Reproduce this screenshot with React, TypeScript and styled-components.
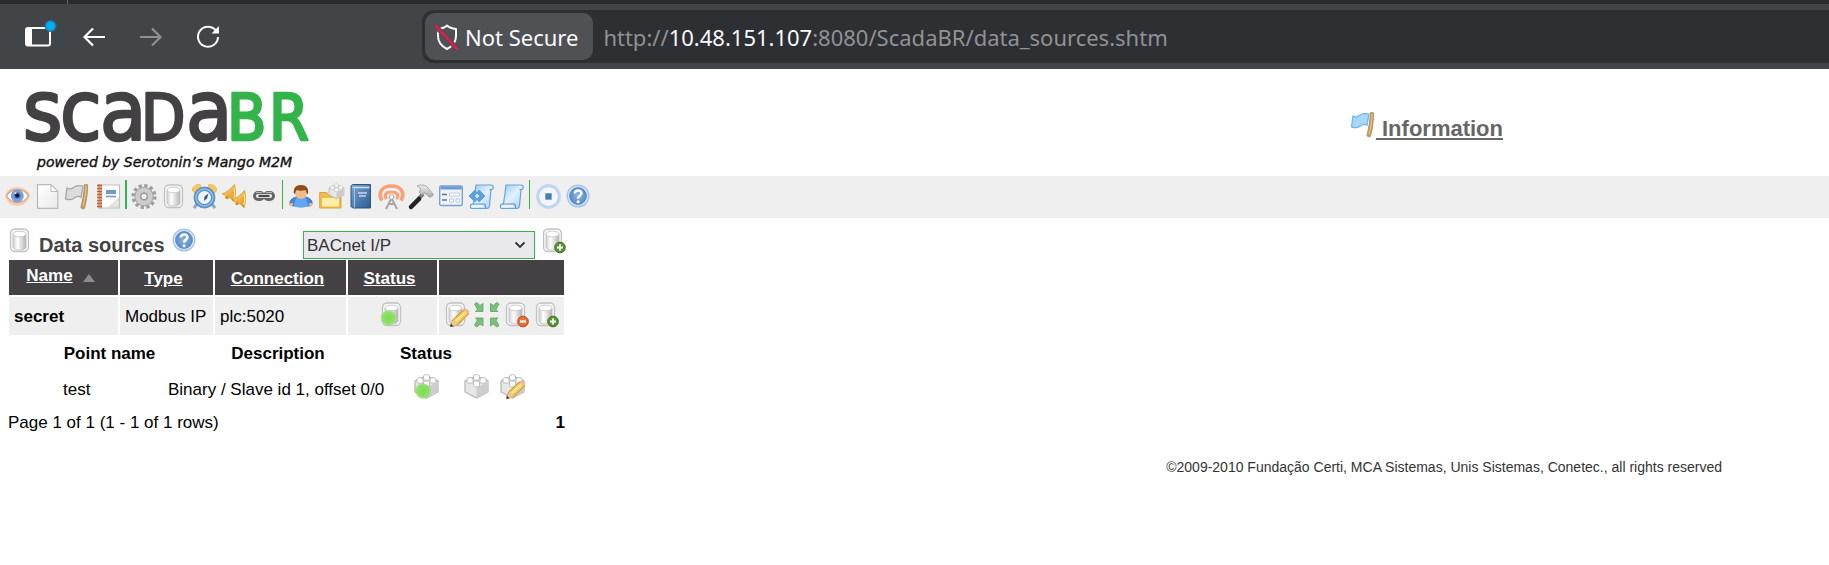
import React from "react";
import styled, { createGlobalStyle } from "styled-components";

const GlobalStyle = createGlobalStyle`
  * {
    box-sizing: border-box;
  }

  body {
    margin: 0;
    background: #ffffff;
    color: #000000;
    font-family: "Liberation Sans", Arial, sans-serif;
    font-size: 17px;
    line-height: 20px;
  }
`;

const Gradients: React.FC = () => (
  <HiddenSvg aria-hidden="true">
    <defs>
      <linearGradient id="metal" x1="0" x2="1">
        <stop offset="0" stopColor="#cfcfcf" />
        <stop offset="0.35" stopColor="#ffffff" />
        <stop offset="1" stopColor="#b4b4b4" />
      </linearGradient>
      <linearGradient id="silver" x1="0" y1="0" x2="0" y2="1">
        <stop offset="0" stopColor="#f0f0f0" />
        <stop offset="1" stopColor="#a9a9a9" />
      </linearGradient>
      <linearGradient id="paper" x1="0" y1="0" x2="1" y2="1">
        <stop offset="0" stopColor="#ffffff" />
        <stop offset="1" stopColor="#e9e9e9" />
      </linearGradient>
      <linearGradient id="sky" x1="0" y1="0" x2="1" y2="1">
        <stop offset="0" stopColor="#8fc4f5" />
        <stop offset="0.5" stopColor="#e2f1ff" />
        <stop offset="1" stopColor="#a5cdf2" />
      </linearGradient>
      <linearGradient id="gold" x1="0" y1="0" x2="1" y2="1">
        <stop offset="0" stopColor="#f6cf72" />
        <stop offset="0.5" stopColor="#f3b94a" />
        <stop offset="1" stopColor="#d8901f" />
      </linearGradient>
      <linearGradient id="navy" x1="0" y1="0" x2="1" y2="1">
        <stop offset="0" stopColor="#7ba6d2" />
        <stop offset="1" stopColor="#2c5b91" />
      </linearGradient>
      <radialGradient id="blue">
        <stop offset="0" stopColor="#8bb4e2" />
        <stop offset="1" stopColor="#5687c3" />
      </radialGradient>
      <radialGradient id="lime">
        <stop offset="0" stopColor="#7edb4e" />
        <stop offset="0.75" stopColor="#8ee068" />
        <stop offset="1" stopColor="#8ee068" stopOpacity="0.35" />
      </radialGradient>
    </defs>
  </HiddenSvg>
);

const drum = (
  <>
    <rect x="2.5" y="1" width="18" height="22.5" rx="4.5" fill="#f6f6f6" stroke="#c2c2c2" strokeWidth="1.3" />
    <path d="M5 6v13c0 4 13 4 13 0V6z" fill="url(#metal)" stroke="#bdbdbd" strokeWidth=".7" />
    <ellipse cx="11.5" cy="6" rx="6.5" ry="2.8" fill="#fff" stroke="#c4c4c4" strokeWidth=".8" />
  </>
);

const brick = (
  <>
    <path d="M1 7 12.5 2 24 7v11L12.5 24 1 18z" fill="#e6e6e6" stroke="#b4b4b4" strokeWidth="1.2" />
    <path d="M12.5 13.500 24 8v10L12.5 24z" fill="#cdcdcd" />
    <g fill="#fcfcfc" stroke="#b4b4b4" strokeWidth=".9">
      <path d="M9.5 2v3c0 1.7 6 1.7 6 0V2c0-1.8-6-1.8-6 0z" />
      <path d="M3 5v3c0 1.7 6 1.7 6 0V5c0-1.8-6-1.8-6 0z" />
      <path d="M16 5v3c0 1.7 6 1.7 6 0V5c0-1.8-6-1.8-6 0z" />
      <path d="M9.5 8.5v3c0 1.7 6 1.7 6 0v-3c0-1.8-6-1.8-6 0z" />
    </g>
  </>
);

const pencil = (
  <>
    <path d="M7 24.5 8.5 18l11-10c2-1.5 6 1.5 5 4l-11 11z" fill="#f6c34c" stroke="#c5882b" />
    <path d="m10.5 18.5 10-9 2 1.7-10 9z" fill="#ffe596" />
    <path d="m7 24.5 1.5-6c2 .3 4 2 5 4.500z" fill="#e9c99a" />
    <path d="M6.500 25v-3.500l3 2.800z" fill="#4a2c12" />
    <path d="m19.500 8 1.500-1c2-1 5 2 4 3.500L24 12z" fill="#f2b896" />
  </>
);

const plus = (
  <>
    <circle cx="19" cy="19.5" r="5.3" fill="#56982f" stroke="#39711b" />
    <path d="M19 16.5v6M16 19.5h6" stroke="#fff" strokeWidth="2" />
  </>
);

const help = (
  <>
    <circle cx="12" cy="12" r="11.5" fill="#a9c5e6" />
    <circle cx="12" cy="12" r="9.5" fill="url(#blue)" stroke="#dfebf8" strokeWidth="1.2" />
    <path d="M8.8 9.5c.2-4.200 6.900-4 6.600-.2-.1 2.300-3.300 2.600-3.300 5.200" fill="none" stroke="#fff" strokeWidth="2.5" />
    <circle cx="12.1" cy="17.7" r="1.5" fill="#fff" />
  </>
);

const scroll = (
  <>
    <path d="M7 1h15c3 0 3 4.500 0 4.500L20.500 22c-.3 2-1.500 2.500-3 2.500H3c-2 0-2.500-4.500.5-4.500h1z" fill="url(#sky)" stroke="#6ba3d8" strokeWidth="1.2" />
    <path d="M3.500 20h12c1.500 1 .5 4.500 2 4.500M20.500 5.500h1.500" fill="none" stroke="#5b97d0" strokeWidth="1.2" />
    <path d="M3.500 22h11" stroke="#f2f9ff" strokeWidth="1.5" />
  </>
);

const flag = (cloth: string, edge: string) => (
  <>
    <path d="M2 4c3 2 5 .5 8-1.500 3-1.800 5-1 8-.3l-2 11c-3-2-5-.6-7 1-2.600 1.800-5 2-8.500.6z" fill={cloth} stroke={edge} strokeWidth="1.3" />
    <path d="m19.500.5 3 .3c.5 4-.8 16-3 23.500-1.200 1-3.400.4-3.600-1C17.500 17 19.100 9 19.500.5z" fill="#c89d5c" stroke="#a8875a" strokeWidth=".8" />
    <path d="M21 2c0 7-1.300 14-3 20" fill="none" stroke="#e6cc98" />
  </>
);

const bell = (
  <>
    <path d="M0 10C5 8 9 5 12.500.5c1.500 5 1.500 11-.5 17.500C9 14 5 11.500 0 10z" fill="url(#gold)" stroke="#cf9735" strokeWidth=".7" />
    <path d="M12 4c1 4 .8 8-.3 11" fill="none" stroke="#fbe3a0" strokeWidth="1.2" />
    <circle cx="5" cy="13.5" r="1.8" fill="#d8901f" />
  </>
);

const icons: Record<string, React.ReactNode> = {
  drum,
  help,
  scroll,
  brick,
  eye: (
    <>
      <path d="M0 12C2 5 7 3 12.500 3S23 6 25 11c-1.500 7-6 11-12.500 11S1.500 18 0 12z" fill="#f3d0b5" />
      <path d="M1.500 12C4 7.500 8 5.500 12.500 5.500S21.500 8 23.500 12c-2.500 4.500-6.500 6.500-11 6.500S4 16 1.500 12z" fill="#fff" stroke="#d3a583" strokeWidth="1.3" />
      <circle cx="12.3" cy="12" r="6.5" fill="#7ba0e0" />
      <circle cx="12.3" cy="11.5" r="3.5" fill="#5d80c0" />
      <circle cx="12.3" cy="11.5" r="2.2" fill="#111c30" />
      <circle cx="10.5" cy="9" r="1.1" fill="#dceaff" />
    </>
  ),
  page: (
    <>
      <path d="M2.500.7H16l6.800 6.800v16.800H2.500z" fill="url(#paper)" stroke="#b9b9b9" strokeWidth="1.2" />
      <path d="M16 .7v6.800h6.800z" fill="#fff" stroke="#b9b9b9" />
    </>
  ),
  greyFlag: flag("#dcdcdc", "#a6a6a6"),
  blueFlag: flag("#a5d8fb", "#6fb8ee"),
  report: (
    <>
      <path d="M5.500 1h19v23h-19z" fill="#fff" stroke="#bcc0c4" strokeWidth="1.2" />
      <path d="M3 0h4v24.500H3z" fill="#e3ad8b" />
      <path d="M2 1.500h5M2 4.500h5M2 7.500h5M2 10.500h5M2 13.500h5M2 16.500h5M2 19.500h5M2 22.500h5" stroke="#b9643c" strokeWidth="1.3" />
      <path d="M11 6h10v4H11z" fill="#6e99d6" />
      <path d="M11 12.500h10" stroke="#6e99d6" strokeWidth="1.6" />
      <path d="m14 23 10-9v9z" fill="#e6e6e6" stroke="#c9c9c9" strokeWidth=".7" />
    </>
  ),
  gear: (
    <>
      <circle cx="12" cy="12.5" r="10.3" fill="none" stroke="#9c9c9c" strokeWidth="4.5" strokeDasharray="3 2.393" />
      <circle cx="12" cy="12.5" r="6.5" fill="none" stroke="#a6a6a6" strokeWidth="6.5" />
      <circle cx="12" cy="12.5" r="6.5" fill="none" stroke="#cccccc" strokeWidth="4.5" />
      <circle cx="12" cy="12.5" r="3.2" fill="#efefef" stroke="#8e8e8e" />
    </>
  ),
  clock: (
    <>
      <path d="m5 20-3 4M20 20l3 4" stroke="#8aa9cb" strokeWidth="3" />
      <path d="M.5 7C0 3 3 0 8 .5l1 2L3 9zM24.500 7C25 3 22 0 17 .5l-1 2L22 9z" fill="#f6c95f" stroke="#e3ad48" strokeWidth=".7" />
      <circle cx="12.5" cy="13.5" r="10.5" fill="#5b95cf" stroke="#4479ad" strokeWidth=".7" />
      <circle cx="12.5" cy="13.5" r="8.5" fill="none" stroke="#91bde5" strokeWidth="1.5" />
      <circle cx="12.5" cy="13.5" r="6.5" fill="#edf5fb" />
      <path d="m12 17 .5-4.500 4-3-1.500 5z" fill="#45586b" />
    </>
  ),
  bells: (
    <>
      {bell}
      <g transform="translate(10 6)">{bell}</g>
    </>
  ),
  chain: (
    <>
      <rect x="2.5" y="8.5" width="9" height="7" rx="3.5" fill="none" stroke="#666" strokeWidth="3" />
      <rect x="12.5" y="8.5" width="9" height="7" rx="3.5" fill="none" stroke="#666" strokeWidth="3" />
      <path d="M4 8.500h6M14 8.500h6" stroke="#b5b5b5" />
      <path d="M6.500 12h11" stroke="#d5d5d5" strokeWidth="4" />
      <path d="M6.500 12h11" stroke="#4a4a4a" strokeWidth="2" />
    </>
  ),
  user: (
    <>
      <path d="M1 20c-1-4 4-7 7-7h8c3 0 8 3 7 7-1 2-3 2-4 2H5c-1 0-3 0-4-2z" fill="#4585dd" stroke="#2f67b8" strokeWidth=".8" />
      <path d="M7 14h10l2 7c-1 3.500-13 3.500-14 0z" fill="#5fa6f8" />
      <path d="M0 20c2-2 5-1 4 1s-3 2-4-1zM24 20c-2-2-5-1-4 1s3 2 4-1z" fill="#eeb481" />
      <circle cx="12" cy="9" r="6" fill="#efbc8b" />
      <path d="M5 10C4 4 7 1 12 1s8 3 7 9c-2 0-1-3-3-4-2 1-6 1-8 0-2 1-1 4-3 4z" fill="#8c4b18" />
    </>
  ),
  folder: (
    <>
      <path d="M.7 24V8.500h7l2 3H22V24z" fill="#f0bb4e" stroke="#dca23c" />
      <path d="M3 22.500V14h17v8.500z" fill="#fdeea6" />
      <g transform="translate(9.5 -.5) scale(.64)">{brick}</g>
    </>
  ),
  book: (
    <>
      <path d="M2 3c0-2 1-2.500 3-2.500h16.500V24H5c-2 0-3-1-3-2z" fill="url(#navy)" stroke="#2c5785" />
      <path d="M3.500 3.500h17" stroke="#cfdded" strokeWidth="1.6" />
      <path d="M5.500 5v18.500" stroke="#a8c6e4" />
      <path d="M9 9h9M10 12h7" stroke="#c1d8ed" strokeWidth="1.3" />
    </>
  ),
  antenna: (
    <>
      <g fill="none" stroke="#f9a277">
        <path d="M3 16.500C-2 8 4 2 12.500 2S27 8 22 16.500" strokeWidth="3.7" />
        <path d="M7.500 15C4.500 10.500 7.500 8 12.500 8S20.500 10.500 17.500 15" strokeWidth="3.2" />
      </g>
      <path d="m7 25 5.500-11L18 25M9 20h7" fill="none" stroke="#a8a8a8" strokeWidth="2" />
      <circle cx="12.5" cy="13" r="2.3" fill="#f8f8f8" stroke="#aaa" />
    </>
  ),
  hammer: (
    <>
      <path d="M2 23 14 10" stroke="#777" strokeWidth="4" />
      <path d="M2 23 10 15" stroke="#232323" strokeWidth="4.5" strokeLinecap="round" />
      <path d="M8 2c4-2 9-1 11 2l5 6c1 2-3 4-4.500 2.500L16 9l-3 2-3-3 2-3c-1-1-2-2-4-3z" fill="url(#silver)" stroke="#999" strokeWidth=".8" />
    </>
  ),
  form: (
    <>
      <rect x=".7" y="2" width="22.6" height="19.5" rx="1.5" fill="#eef4fd" stroke="#7a9fd0" strokeWidth="1.4" />
      <path d="M1.500 2.500h21v3h-21z" fill="#6f99d2" />
      <path d="M3 10.500h5M3 16h5" stroke="#667281" strokeWidth="1.7" />
      <path d="M10.500 9h10v3h-10zM10.500 15h4v3h-4zM17 15h3.500v3H17z" fill="#fff" stroke="#aebfd3" strokeWidth=".8" />
    </>
  ),
  scrollCode: (
    <>
      {scroll}
      <path d="m6 6-6 6 6 6 2-3-3-3 3-3zM10 6l6 6-6 6-2-3 3-3-3-3z" fill="#5ea0df" stroke="#5ea0df" strokeWidth="1" />
    </>
  ),
  stop: (
    <>
      <circle cx="12.5" cy="12.5" r="12.5" fill="#c4d9f1" />
      <circle cx="12.5" cy="12.5" r="10" fill="#f2f6fb" stroke="#adc8e8" />
      <path d="M9.500 9.500h6v6h-6z" fill="#4c79ae" stroke="#7fa7d4" />
    </>
  ),
  drumAdd: (
    <>
      {drum}
      {plus}
    </>
  ),
  drumOn: (
    <>
      {drum}
      <circle cx="8.5" cy="16" r="8" fill="url(#lime)" />
    </>
  ),
  drumEdit: (
    <>
      {drum}
      {pencil}
    </>
  ),
  drumDelete: (
    <>
      {drum}
      <circle cx="19" cy="19.5" r="5.3" fill="#e47135" stroke="#b8461a" />
      <path d="M16 19.5h6" stroke="#fff" strokeWidth="2.2" />
    </>
  ),
  expand: (
    <g fill="#7bbf7c" stroke="#58a45d" strokeWidth=".8">
      <path id="corner" d="M.5 2 3 .5l3 3L9 1.500V9.500H1.500l2-2z" />
      <use href="#corner" transform="matrix(-1 0 0 1 25.5 0)" />
      <use href="#corner" transform="matrix(1 0 0 -1 0 25.5)" />
      <use href="#corner" transform="matrix(-1 0 0 -1 25.5 25.5)" />
    </g>
  ),
  brickOn: (
    <>
      {brick}
      <circle cx="9" cy="17" r="8" fill="url(#lime)" />
    </>
  ),
  brickEdit: (
    <>
      {brick}
      {pencil}
    </>
  ),
};

const Icon: React.FC<{ name: string }> = ({ name }) => (
  <IconSvg viewBox="0 0 25 25" aria-hidden="true">
    {icons[name]}
  </IconSvg>
);

const menu = [
  [
    ["eye", "Watch list"],
    ["page", "Graphic views"],
    ["greyFlag", "Alarms"],
    ["report", "Reports"],
  ],
  [
    ["gear", "Event handlers"],
    ["drum", "Data sources"],
    ["clock", "Scheduled events"],
    ["bells", "Compound events"],
    ["chain", "Point links"],
  ],
  [
    ["user", "Users"],
    ["folder", "Point hierarchy"],
    ["book", "Mailing lists"],
    ["antenna", "Publishers"],
    ["hammer", "Maintenance events"],
    ["form", "System settings"],
    ["scrollCode", "Scripting"],
    ["scroll", "SQL"],
  ],
  [
    ["stop", "Logout"],
    ["help", "Help"],
  ],
];

const dividers = [0, 2, 1, 1];

const BrowserBar: React.FC = () => (
  <>
    <TabStrip />
    <Toolbar>
      <ToolButtons>
        <ToolButton aria-label="Sidebar">
          <svg width="32" height="32" viewBox="0 0 32 32" fill="none">
            <rect x="5" y="7" width="24" height="17.5" rx="2" stroke="#fff" strokeWidth="2" />
            <path d="M5 7h6v17.500H5z" fill="#fff" />
            <circle cx="29.5" cy="5" r="6" fill="#287298" />
            <circle cx="29.5" cy="5" r="4.5" fill="#00adf5" />
          </svg>
        </ToolButton>
        <ToolButton aria-label="Back">
          <svg width="32" height="32" viewBox="0 0 32 32" fill="none" stroke="#fff" strokeWidth="2.2">
            <path d="M27 16H6.500M15 7.500L6.500 16l8.500 8.500" />
          </svg>
        </ToolButton>
        <ToolButton aria-label="Forward" disabled>
          <svg width="32" height="32" viewBox="0 0 32 32" fill="none" stroke="#8f9092" strokeWidth="2.2">
            <path d="M5 16h20.500M17 7.500l8.500 8.500-8.500 8.500" />
          </svg>
        </ToolButton>
        <ToolButton aria-label="Reload">
          <svg width="32" height="32" viewBox="0 0 32 32" fill="none">
            <path d="M24.500 10.500A10 10 0 1 0 26 16" stroke="#fff" strokeWidth="2" />
            <path d="M27 5v7.500h-7.500z" fill="#fff" />
          </svg>
        </ToolButton>
      </ToolButtons>
      <AddressBar>
        <Security>
          <svg width="26" height="28" viewBox="0 0 26 28" fill="none">
            <path d="M13 2.500c2 2 5 3 9 3.500v7c0 6-3 10-9 13-6-3-9-7-9-13V6c4-.500 7-1.500 9-3.500z" stroke="#fbfbfe" strokeWidth="2" strokeLinejoin="round" />
            <path d="m1.500 3 22 23.500" stroke="#505154" strokeWidth="5" />
            <path d="m1.500 2.500 22 24" stroke="#f5134b" strokeWidth="2.2" />
          </svg>
          Not Secure
        </Security>
        <Url>
          http://<b>10.48.151.107</b>:8080/ScadaBR/data_sources.shtm
        </Url>
      </AddressBar>
    </Toolbar>
  </>
);

const Logo: React.FC = () => (
  <LogoSvg viewBox="0 0 320 100" role="img" aria-label="ScadaBR, powered by Serotonin's Mango M2M">
    <g fontFamily="'DejaVu Sans Condensed', 'DejaVu Sans', sans-serif" fill="#434143" stroke="#434143" strokeWidth="2.6" strokeLinejoin="round">
      <text y="64" fontSize="84" x="23 60 100">
        sca
      </text>
      <text x="141" y="64" fontSize="64">
        D
      </text>
      <text x="186" y="64" fontSize="84">
        a
      </text>
      <text x="227 269" y="64" fontSize="64" fill="#33b44a" stroke="#33b44a">
        BR
      </text>
    </g>
    <text x="37" y="91" fontFamily="'DejaVu Sans', sans-serif" fontSize="14" fontStyle="italic" fill="#111" stroke="#111" strokeWidth=".4">
      powered by Serotonin’s Mango M2M
    </text>
  </LogoSvg>
);

const App: React.FC = () => {
  return (
    <>
      <GlobalStyle />
      <Gradients />
      <BrowserBar />
      <PageHeader>
        <Logo />
        <InfoLink href="#information">
          <Icon name="blueFlag" />
          <span>&nbsp;Information</span>
        </InfoLink>
      </PageHeader>
      <Menu>
        {menu.map((group, i) => (
          <MenuGroup key={i} $divider={dividers[i]}>
            {group.map(([icon, label]) => (
              <IconLink key={label} href={`#${icon}`} aria-label={label}>
                <Icon name={icon} />
              </IconLink>
            ))}
          </MenuGroup>
        ))}
      </Menu>
      <Content>
        <TitleBar>
          <Icon name="drum" />
          <Title>Data sources</Title>
          <IconButton aria-label="Help">
            <Icon name="help" />
          </IconButton>
          <SelectBox>
            <TypeSelect aria-label="Data source type" defaultValue="bacnet">
              <option value="bacnet">BACnet I/P</option>
            </TypeSelect>
            <svg width="12" height="8" viewBox="0 0 12 8" fill="none" stroke="#333" strokeWidth="1.8">
              <path d="m1.500 1.500 4.500 4.500 4.500-4.500" />
            </svg>
          </SelectBox>
          <IconButton aria-label="Add data source">
            <Icon name="drumAdd" />
          </IconButton>
        </TitleBar>

        <SourceTable>
          <colgroup>
            <col width="109" />
            <col width="93" />
            <col width="131" />
            <col width="89" />
            <col width="125" />
          </colgroup>
          <thead>
            <tr>
              <HeadCell>
                <SortedName>
                  <a href="#name">Name</a>
                  <svg width="12" height="8" viewBox="0 0 12 8" aria-hidden="true">
                    <path d="M6 0l6 8H0z" fill="#8d8c8d" />
                  </svg>
                </SortedName>
              </HeadCell>
              <HeadCell>
                <a href="#type">Type</a>
              </HeadCell>
              <HeadCell>
                <a href="#connection">Connection</a>
              </HeadCell>
              <HeadCell>
                <a href="#status">Status</a>
              </HeadCell>
              <HeadCell as="td" />
            </tr>
          </thead>
          <tbody>
            <tr>
              <Cell>
                <b>secret</b>
              </Cell>
              <Cell>Modbus IP</Cell>
              <Cell>plc:5020</Cell>
              <Cell>
                <Actions $center>
                  <IconButton aria-label="Disable data source">
                    <Icon name="drumOn" />
                  </IconButton>
                </Actions>
              </Cell>
              <Cell>
                <Actions>
                  <IconButton aria-label="Edit data source">
                    <Icon name="drumEdit" />
                  </IconButton>
                  <IconButton aria-label="Enable all points">
                    <Icon name="expand" />
                  </IconButton>
                  <IconButton aria-label="Delete data source">
                    <Icon name="drumDelete" />
                  </IconButton>
                  <IconButton aria-label="Copy data source">
                    <Icon name="drumAdd" />
                  </IconButton>
                </Actions>
              </Cell>
            </tr>
            <tr>
              <PointsCell colSpan={5}>
                <PointTable>
                  <colgroup>
                    <col width="103" />
                    <col width="230" />
                    <col width="62" />
                    <col width="71" />
                  </colgroup>
                  <thead>
                    <tr>
                      <th>Point name</th>
                      <th>Description</th>
                      <th>Status</th>
                      <td />
                    </tr>
                  </thead>
                  <tbody>
                    <tr>
                      <td>test</td>
                      <td>Binary / Slave id 1, offset 0/0</td>
                      <td>
                        <Actions $center>
                          <IconButton aria-label="Disable point">
                            <Icon name="brickOn" />
                          </IconButton>
                        </Actions>
                      </td>
                      <td>
                        <Actions $gap={11}>
                          <IconButton aria-label="Point details">
                            <Icon name="brick" />
                          </IconButton>
                          <IconButton aria-label="Edit point">
                            <Icon name="brickEdit" />
                          </IconButton>
                        </Actions>
                      </td>
                    </tr>
                  </tbody>
                </PointTable>
              </PointsCell>
            </tr>
          </tbody>
        </SourceTable>

        <Pager>
          <span>Page 1 of 1 (1 - 1 of 1 rows)</span>
          <b>1</b>
        </Pager>
      </Content>
      <Footer>©2009-2010 Fundação Certi, MCA Sistemas, Unis Sistemas, Conetec., all rights reserved</Footer>
    </>
  );
};

export default App;

const HiddenSvg = styled.svg`
  position: absolute;
  width: 0;
  height: 0;
`;

const IconSvg = styled.svg`
  display: block;
  flex: none;
  width: 25px;
  height: 25px;
  overflow: visible;
`;

const LogoSvg = styled.svg`
  display: block;
  width: 320px;
  height: 100px;
  overflow: visible;
`;

const TabStrip = styled.div`
  height: 4px;
  background: #292b2f;

  &::before {
    content: "";
    display: block;
    width: 67px;
    height: 4px;
    border-right: 1px solid #66696c;
  }
`;

const Toolbar = styled.header`
  display: flex;
  align-items: center;
  height: 65px;
  background: #424547;
`;

const ToolButtons = styled.div`
  display: flex;
  flex: none;
  gap: 25px;
  width: 422px;
  padding-left: 21px;
`;

const ToolButton = styled.button`
  width: 32px;
  height: 32px;
  padding: 0;
  border: 0;
  background: none;

  svg {
    display: block;
    overflow: visible;
  }
`;

const AddressBar = styled.div`
  display: flex;
  align-items: center;
  flex: 1;
  gap: 10px;
  height: 53px;
  padding: 3px;
  border-radius: 12px 0 0 12px;
  background: #2e2f33;
  font-family: "Noto Sans", sans-serif;
  font-size: 22px;
  line-height: 26px;
`;

const Security = styled.button`
  display: flex;
  align-items: center;
  gap: 5px;
  height: 47px;
  padding: 0 15px 0 9px;
  border: 0;
  border-radius: 10px;
  background: #505154;
  color: #fbfbfe;
  font: inherit;
`;

const Url = styled.span`
  color: #919294;
  white-space: nowrap;

  b {
    color: #fbfbfe;
    font-weight: 400;
  }
`;

const PageHeader = styled.div`
  display: flex;
  align-items: flex-start;
  justify-content: space-between;
  height: 107px;
  padding: 7px 326px 0 0;
`;

const InfoLink = styled.a`
  display: flex;
  margin-top: 36px;
  color: #666666;
  font-size: 22px;
  font-weight: bold;
  line-height: 34px;
  text-decoration: none;

  span {
    text-decoration: underline;
  }
`;

const Menu = styled.nav`
  display: flex;
  gap: 5px;
  height: 42px;
  padding: 4px 5px;
  background: #efefef;
`;

const MenuGroup = styled.div<{ $divider: number }>`
  display: flex;
  align-items: flex-end;
  gap: 5px;
  height: 29px;
  padding-left: ${({ $divider }) => ($divider ? 7 - $divider : 0)}px;
  border-left: ${({ $divider }) => $divider}px solid #33b44a;
`;

const IconLink = styled.a`
  display: block;
`;

const IconButton = styled.button`
  display: block;
  padding: 0;
  border: 0;
  background: none;
`;

const Content = styled.main`
  width: 559px;
  margin-left: 7px;
  padding-top: 10px;
`;

const TitleBar = styled.div`
  display: flex;
  align-items: flex-start;
  gap: 6px;
  height: 30px;
  padding-left: 1px;
`;

const Title = styled.h1`
  margin: 5px 1px 0 0;
  color: #444444;
  font-size: 20px;
  line-height: 24px;
`;

const SelectBox = styled.div`
  display: grid;
  align-items: center;
  width: 232px;
  margin: 3px 0 0 auto;

  > * {
    grid-area: 1 / 1;
  }

  svg {
    justify-self: end;
    margin-right: 9px;
    pointer-events: none;
  }
`;

const TypeSelect = styled.select`
  width: 100%;
  height: 28px;
  padding: 0 3px;
  appearance: none;
  border: 1px solid #33b44a;
  border-radius: 0;
  background: #e9e8ed;
  color: #333333;
  font-family: inherit;
  font-size: 17px;
`;

const SourceTable = styled.table`
  width: 100%;
  table-layout: fixed;
  border-spacing: 2px;
`;

const HeadCell = styled.th`
  height: 35px;
  padding: 2px 6px 0 0;
  background: #434143;
  color: #ffffff;

  a {
    color: inherit;
  }
`;

const SortedName = styled.div`
  display: flex;
  align-items: center;
  justify-content: center;
  gap: 10px;
  padding-bottom: 5px;

  svg {
    margin-top: 4px;
  }
`;

const Cell = styled.td`
  height: 38px;
  padding: 2px 5px 0;
  background: #efefef;
  white-space: nowrap;
`;

const Actions = styled.div<{ $center?: boolean; $gap?: number }>`
  display: flex;
  justify-content: ${({ $center }) => ($center ? "center" : "flex-start")};
  gap: ${({ $gap }) => $gap ?? 5}px;
  padding-bottom: 6px;
`;

const PointsCell = styled.td`
  padding: 0 0 0 47px;
`;

const PointTable = styled.table`
  border-spacing: 2px;

  th,
  td {
    padding: 0 5px;
    white-space: nowrap;
  }

  th {
    height: 30px;
  }

  tbody td {
    height: 34px;
    padding-top: 3px;
  }
`;

const Pager = styled.div`
  display: flex;
  justify-content: space-between;
  padding: 4px 1px 2px;
`;

const Footer = styled.footer`
  margin-top: 22px;
  padding-right: 107px;
  color: #333333;
  font-size: 14px;
  text-align: right;
`;
